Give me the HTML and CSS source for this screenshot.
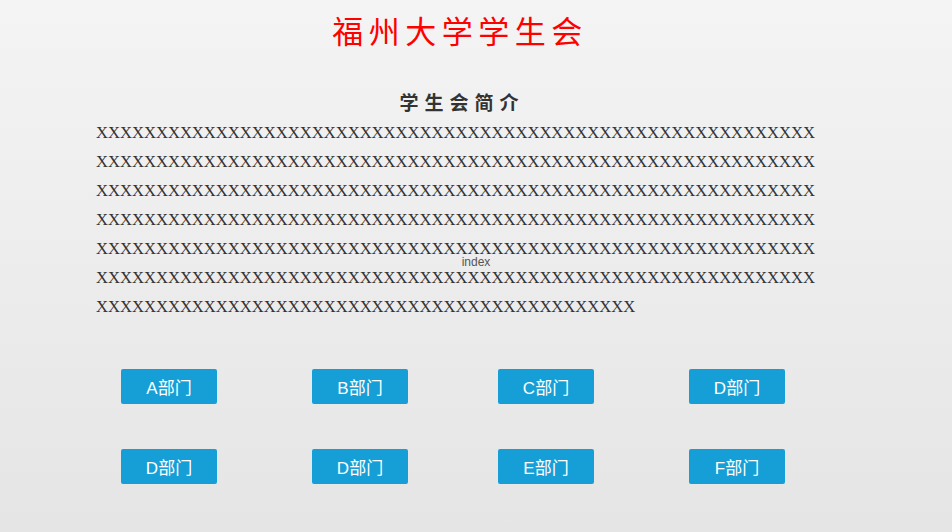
FILE: index.html
```html
<!DOCTYPE html>
<html lang="zh">
<head>
<meta charset="utf-8">
<title>index</title>
<link rel="stylesheet" href="styles.css">
</head>
<body>
<div class="page">
  <h1 class="title">福州大学学生会</h1>
  <h2 class="subtitle">学生会简介</h2>
  <p class="intro">XXXXXXXXXXXXXXXXXXXXXXXXXXXXXXXXXXXXXXXXXXXXXXXXXXXXXXXXXXXXXXXXXXXXXXXXXXXXXXXXXXXXXXXXXXXXXXXXXXXXXXXXXXXXXXXXXXXXXXXXXXXXXXXXXXXXXXXXXXXXXXXXXXXXXXXXXXXXXXXXXXXXXXXXXXXXXXXXXXXXXXXXXXXXXXXXXXXXXXXXXXXXXXXXXXXXXXXXXXXXXXXXXXXXXXXXXXXXXXXXXXXXXXXXXXXXXXXXXXXXXXXXXXXXXXXXXXXXXXXXXXXXXXXXXXXXXXXXXXXXXXXXXXXXXXXXXXXXXXXXXXXXXXXXXXXXXXXXXXXXXXXXXXXXXXXXXXXXXXXXXXXXXXXXXXXXXXXXXXXXXXXXXXXXXXXXXXXXXXXXXXXXX</p>
  <div class="buttons">
    <a class="btn">A部门</a>
    <a class="btn">B部门</a>
    <a class="btn">C部门</a>
    <a class="btn">D部门</a>
    <a class="btn">D部门</a>
    <a class="btn">D部门</a>
    <a class="btn">E部门</a>
    <a class="btn">F部门</a>
  </div>
</div>
<div class="label">index</div>
</body>
</html>
```
FILE: styles.css
```css
html, body {
  margin: 0;
  padding: 0;
  height: 100%;
}
body {
  background: linear-gradient(to bottom, #f4f4f4 0%, #e5e5e5 100%);
  position: relative;
  font-family: "Liberation Serif", serif;
}
.page {
  width: 720px;
  margin-left: 96px;
  padding-top: 8px;
}
.title {
  margin: 0;
  padding-left: 8px;
  text-align: center;
  font-family: "Noto Sans CJK SC", sans-serif;
  font-weight: 400;
  font-size: 31px;
  line-height: 44px;
  letter-spacing: 5.5px;
  color: #ff0000;
}
.subtitle {
  margin: 36px 0 0 0;
  padding-left: 12px;
  text-align: center;
  font-family: "Noto Sans CJK SC", sans-serif;
  font-weight: 700;
  font-size: 19px;
  line-height: 28px;
  letter-spacing: 6px;
  color: #333;
}
.intro {
  margin: 2px 0 0 0;
  font-size: 16.6px;
  line-height: 29px;
  color: #333;
  word-break: break-all;
}
.buttons {
  display: grid;
  grid-template-columns: 191px 186px 191px 96px;
  row-gap: 45px;
  margin-left: 25px;
  margin-top: 48px;
}
.btn {
  display: flex;
  align-items: center;
  justify-content: center;
  width: 96px;
  height: 35px;
  background: #169fd6;
  border-radius: 2px;
  color: #fff;
  font-family: "Liberation Sans", "Noto Sans CJK SC", sans-serif;
  font-size: 17px;
}
.label {
  position: absolute;
  left: 0;
  right: 0;
  top: 255px;
  text-align: center;
  font-family: "Liberation Sans", sans-serif;
  font-size: 12px;
  color: #555;
}
```
